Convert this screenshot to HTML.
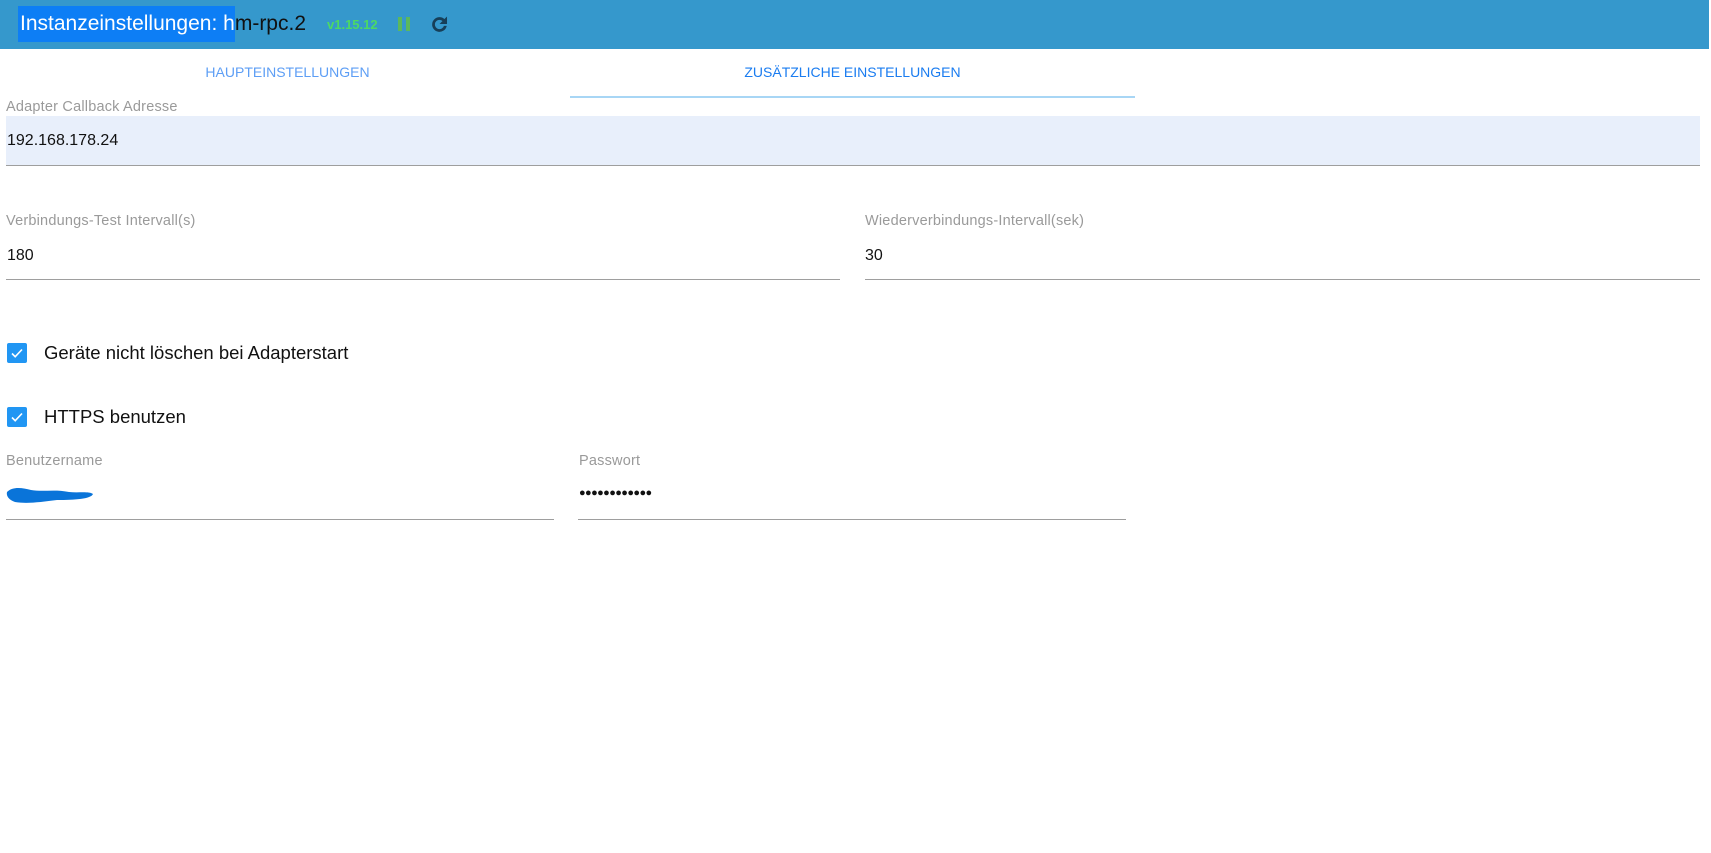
<!DOCTYPE html>
<html><head><meta charset="utf-8">
<style>
*{box-sizing:border-box;margin:0;padding:0}
html,body{width:1711px;height:853px;overflow:hidden;background:#fff;font-family:"Liberation Sans",Arial,sans-serif}
.hdr{position:absolute;left:0;top:0;width:1709px;height:49px;background:#3598cc}
.title{position:absolute;left:18px;top:6px;height:36px;line-height:36px;font-size:21px;color:#111;white-space:nowrap}
.title .sel{display:inline-block;height:36px;background:#0d7ef5;color:#fff;padding-left:2px}
.ver{position:absolute;left:327px;top:17px;font-size:13px;font-weight:bold;color:#4cd964}
.bar{position:absolute;top:17px;width:4px;height:14px;background:#5cb85c}
.abs{position:absolute;white-space:nowrap}
.tab{position:absolute;top:64px;font-size:14px;color:#5d9ef5;text-align:center;width:565px}
.lbl{position:absolute;font-size:14.5px;letter-spacing:0.2px;color:#9a9a9a}
.val{position:absolute;font-size:16px;color:#111}
.line{position:absolute;height:1px;background:#9e9e9e}
.cb{position:absolute;left:7px;width:20px;height:20px;background:#2196f3;border-radius:2px}
.cbt{position:absolute;left:44px;font-size:18.5px;color:#111}
</style></head><body>
<div class="hdr"></div>
<div class="title"><span class="sel">Instanzeinstellungen: h</span>m-rpc.2</div>
<div class="ver">v1.15.12</div>
<div class="bar" style="left:398px"></div><div class="bar" style="left:406px"></div>
<svg class="abs" style="left:429px;top:14px" width="21" height="21" viewBox="0 0 24 24"><path d="M17.65 6.35A7.95 7.95 0 0 0 12 4a8 8 0 1 0 7.73 10h-2.4A5.7 5.7 0 1 1 12 6.3c1.6 0 3 .66 4 1.7L13 11h7.2V3.8l-2.55 2.55z" fill="#173f58" stroke="#173f58" stroke-width="0.8"/></svg>

<div class="tab" style="left:5px">HAUPTEINSTELLUNGEN</div>
<div class="tab" style="left:570px;color:#1a7cf0">ZUSÄTZLICHE EINSTELLUNGEN</div>
<div class="abs" style="left:570px;top:96px;width:565px;height:2px;background:#a8d6f5"></div>

<div class="lbl" style="left:6px;top:99px">Adapter Callback Adresse</div>
<div class="abs" style="left:6px;top:116px;width:1694px;height:49px;background:#e8effb"></div>
<div class="line" style="left:6px;top:165px;width:1694px"></div>
<div class="val" style="left:7px;top:132px">192.168.178.24</div>

<div class="lbl" style="left:6px;top:213px">Verbindungs-Test Intervall(s)</div>
<div class="val" style="left:7px;top:247px">180</div>
<div class="line" style="left:6px;top:279px;width:834px"></div>
<div class="lbl" style="left:865px;top:213px">Wiederverbindungs-Intervall(sek)</div>
<div class="val" style="left:865px;top:247px">30</div>
<div class="line" style="left:865px;top:279px;width:835px"></div>

<div class="cb" style="top:343px"><svg width="20" height="20" viewBox="0 0 20 20"><path d="M5 10.5l3.2 3.2L15 6.5" stroke="#fff" stroke-width="1.6" fill="none"/></svg></div>
<div class="cbt" style="top:342px">Geräte nicht löschen bei Adapterstart</div>
<div class="cb" style="top:407px"><svg width="20" height="20" viewBox="0 0 20 20"><path d="M5 10.5l3.2 3.2L15 6.5" stroke="#fff" stroke-width="1.6" fill="none"/></svg></div>
<div class="cbt" style="top:406px">HTTPS benutzen</div>

<div class="lbl" style="left:6px;top:453px">Benutzername</div>
<svg class="abs" style="left:5px;top:484px" width="92" height="22" viewBox="0 0 92 22"><path d="M2 8C8 2 18 4 26 6 38 8 50 5 64 8 74 9 84 7 88 10 86 15 70 16 52 16 36 18 22 20 10 18 4 16 1 12 2 8Z" fill="#0a74d9"/></svg>
<div class="line" style="left:6px;top:519px;width:548px"></div>
<div class="lbl" style="left:579px;top:453px">Passwort</div>
<div class="val" style="left:579px;top:487px;font-size:11px;letter-spacing:-0.6px">●●●●●●●●●●●●</div>
<div class="line" style="left:578px;top:519px;width:548px"></div>
</body></html>
